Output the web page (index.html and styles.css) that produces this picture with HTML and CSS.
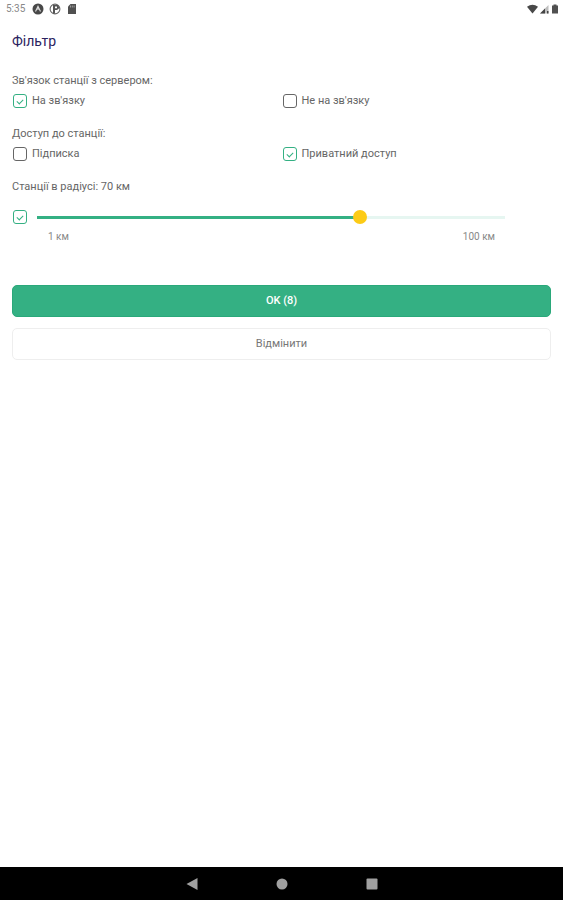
FILE: index.html
```html
<!DOCTYPE html>
<html lang="uk">
<head>
    <meta charset="utf-8">
    <meta name="viewport" content="width=device-width, initial-scale=1">
    <title>Фільтр</title>
    <link rel="stylesheet" href="styles.css">
</head>
<body>
<div class="status-bar">
    <span class="time">5:35</span>
    <svg width="12" height="12" viewBox="0 0 12 12">
        <circle cx="6" cy="6" r="5.5" fill="#484848"/>
        <path d="M3.5 8.5L6 3.2l2.5 5.3M4.4 6.6L6 5.8l1.6.8" fill="none" stroke="#ddd" stroke-width="1.1"/>
    </svg>
    <svg width="12" height="12" viewBox="0 0 12 12">
        <circle cx="6" cy="6" r="4.9" fill="#fff" stroke="#666" stroke-width="1.1"/>
        <path d="M4 2h5l1.5 3L8 7H6v3.5H4z" fill="#555"/>
        <path d="M6 3.6h2v1.6H6z" fill="#fff"/>
    </svg>
    <svg width="12" height="12" viewBox="0 0 12 12">
        <path d="M4.5 1H10v10H2V3.5z" fill="#505050"/>
        <path d="M4.5 2.5v2M6.3 2.5v2M8.1 2.5v2" stroke="#bbb" stroke-width=".7"/>
    </svg>
    <div class="signals">
        <svg width="11" height="10" viewBox="0 0 11 10">
            <path d="M0 2.8Q5.5-1.2 11 2.8L5.5 9.5z" fill="#484848"/>
        </svg>
        <svg width="9" height="10" viewBox="0 0 9 10">
            <path d="M0 9.5L8.5 1v8.5z" fill="#bdbdbd"/>
            <path d="M0 9.5L5 4.5v5zM7 7h1.5v2.5H7z" fill="#444"/>
        </svg>
        <svg width="8" height="10" viewBox="0 0 8 10">
            <path d="M1 1.5h1.5V.5h3v1H7v8H1z" fill="#505050"/>
        </svg>
    </div>
</div>

<form class="filter">
    <h1>Фільтр</h1>

    <fieldset>
        <legend>Зв'язок станції з сервером:</legend>
        <div class="options">
            <label class="option"><input type="checkbox" checked> На зв'язку</label>
            <label class="option"><input type="checkbox"> Не на зв'язку</label>
        </div>
    </fieldset>

    <fieldset>
        <legend>Доступ до станції:</legend>
        <div class="options">
            <label class="option"><input type="checkbox"> Підписка</label>
            <label class="option"><input type="checkbox" checked> Приватний доступ</label>
        </div>
    </fieldset>

    <fieldset>
        <legend>Станції в радіусі: 70 км</legend>
        <div class="radius">
            <input type="checkbox" aria-label="Станції в радіусі" checked>
            <input class="slider" type="range" aria-label="Радіус, км" min="1" max="100" value="70">
        </div>
        <div class="limits">
            <span>1 км</span>
            <span>100 км</span>
        </div>
    </fieldset>

    <div class="actions">
        <button class="btn btn-ok" type="button">OK (8)</button>
        <button class="btn btn-cancel" type="button">Відмінити</button>
    </div>
</form>

<div class="nav-bar">
    <button type="button" aria-label="Назад">
        <svg width="12" height="14" viewBox="0 0 12 14"><path d="M.5 7L11.500 1v12z" fill="#a0a0a0"/></svg>
    </button>
    <button type="button" aria-label="Додому">
        <svg width="12" height="12" viewBox="0 0 12 12"><circle cx="6" cy="6" r="5.500" fill="#a0a0a0"/></svg>
    </button>
    <button type="button" aria-label="Огляд">
        <svg width="12" height="12" viewBox="0 0 12 12"><rect x=".5" y=".5" width="11" height="11" rx="1" fill="#a0a0a0"/></svg>
    </button>
</div>
</body>
</html>
```
FILE: styles.css
```css
* {
    box-sizing: border-box;
}

body {
    display: flex;
    flex-direction: column;
    min-height: 100vh;
    margin: 0;
    background: #fff;
    color: #666;
    font-family: Roboto, "Liberation Sans", sans-serif;
    font-size: 11px;
    line-height: 16px;
}

svg {
    display: block;
}

.status-bar {
    display: flex;
    align-items: center;
    gap: 5px;
    height: 18px;
    padding: 0 4px 0 6px;
}

.time {
    margin-right: 2px;
    color: #888;
    font-size: 10px;
}

.signals {
    display: flex;
    gap: 2px;
    margin-left: auto;
}

.filter {
    flex: 1;
    padding: 13px 12px 0;
}

h1 {
    margin: 0 0 22px;
    color: #2a2260;
    font-size: 14px;
    font-weight: 400;
    line-height: 20px;
}

fieldset {
    min-width: 0;
    margin: 0 0 16px;
    padding: 0;
    border: 0;
}

legend {
    padding: 0;
}

.options {
    display: grid;
    grid-template-columns: 1fr 1fr;
    padding-top: 3px;
}

.option {
    display: flex;
    align-items: center;
    gap: 5px;
    height: 18px;
}

[type="checkbox"] {
    display: flex;
    align-items: center;
    justify-content: center;
    flex: none;
    width: 14px;
    height: 14px;
    margin: 0 0 0 1px;
    border: 1px solid #666;
    border-radius: 3px;
    appearance: none;
}

[type="checkbox"]:checked {
    border-color: #34b083;
}

[type="checkbox"]:checked::before {
    content: "";
    width: 5px;
    height: 3px;
    margin-bottom: 1px;
    border: solid #34b083;
    border-width: 0 0 1px 1px;
    transform: rotate(-45deg);
}

.radius {
    display: flex;
    align-items: center;
    gap: 10px;
    padding: 14px 46px 0 0;
}

.slider {
    flex: 1;
    min-width: 0;
    height: 16px;
    margin: 0;
    background: linear-gradient(to right, #34b083 70%, #e6f6f1 70%) center / 100% 3px no-repeat;
    appearance: none;
}

.slider::-webkit-slider-thumb {
    width: 14px;
    height: 14px;
    border-radius: 50%;
    background: #fccb16;
    appearance: none;
}

.limits {
    display: flex;
    justify-content: space-between;
    padding: 4px 56px 0 36px;
    color: #888;
    font-size: 10px;
}

.actions {
    display: grid;
    gap: 11px;
    padding-top: 24px;
}

.btn {
    height: 32px;
    padding: 0;
    border: 1px solid #eee;
    border-radius: 5px;
    background: #fff;
    color: #777;
    font: inherit;
}

.btn-ok {
    border-color: #2aa87a;
    background: #34b083;
    color: #fff;
    font-weight: 500;
}

.nav-bar {
    display: flex;
    align-items: center;
    justify-content: center;
    gap: 66px;
    height: 33px;
    background: #000;
}

.nav-bar button {
    display: flex;
    align-items: center;
    justify-content: center;
    width: 24px;
    height: 24px;
    padding: 0;
    border: 0;
    background: none;
}
```
